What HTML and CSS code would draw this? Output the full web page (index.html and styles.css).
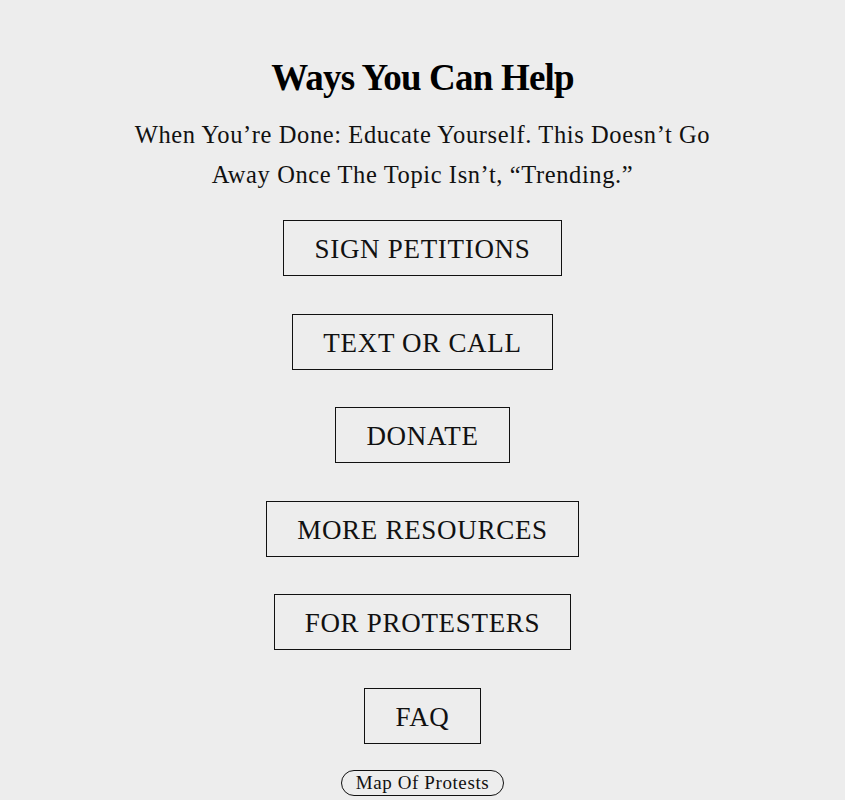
FILE: index.html
```html
<!DOCTYPE html>
<html>
<head>
<meta charset="utf-8">
<link rel="stylesheet" href="styles.css">
</head>
<body>
<main class="help">
  <h1 class="help-title">Ways You Can Help</h1>
  <p class="help-sub">When You’re Done: Educate Yourself. This Doesn’t Go<br>Away Once The Topic Isn’t, “Trending.”</p>
  <div class="help-list">
    <a class="help-btn" href="#">SIGN PETITIONS</a>
    <a class="help-btn" href="#">TEXT OR CALL</a>
    <a class="help-btn" href="#">DONATE</a>
    <a class="help-btn" href="#">MORE RESOURCES</a>
    <a class="help-btn" href="#">FOR PROTESTERS</a>
    <a class="help-btn" href="#">FAQ</a>
  </div>
  <a class="map-pill" href="#">Map Of Protests</a>
</main>
</body>
</html>
```
FILE: styles.css
```css
html, body {
  margin: 0;
  padding: 0;
  background: #ededed;
}
body {
  font-family: "Liberation Serif", "DejaVu Serif", serif;
  color: #111;
}
.help {
  display: flex;
  flex-direction: column;
  align-items: center;
  padding-top: 56px;
}
.help-title {
  margin: 0;
  font-size: 37px;
  font-weight: 700;
  line-height: 44px;
  letter-spacing: -0.8px;
  color: #000;
}
.help-sub {
  margin: 15px 0 0;
  font-size: 24.5px;
  line-height: 40px;
  text-align: center;
  letter-spacing: 0.6px;
}
.help-list {
  display: flex;
  flex-direction: column;
  align-items: center;
  gap: 37.6px;
  margin-top: 25px;
}
.help-btn {
  display: block;
  box-sizing: border-box;
  height: 56px;
  line-height: 56px;
  padding: 0 30px;
  border: 1px solid #111;
  font-size: 27px;
  color: #111;
  text-decoration: none;
  letter-spacing: 0.7px;
}
.map-pill {
  display: block;
  margin-top: 26px;
  box-sizing: border-box;
  height: 26px;
  line-height: 24px;
  padding: 0 14px;
  border: 1px solid #111;
  border-radius: 13px;
  font-size: 19px;
  letter-spacing: 0.6px;
  color: #111;
  text-decoration: none;
}
```
